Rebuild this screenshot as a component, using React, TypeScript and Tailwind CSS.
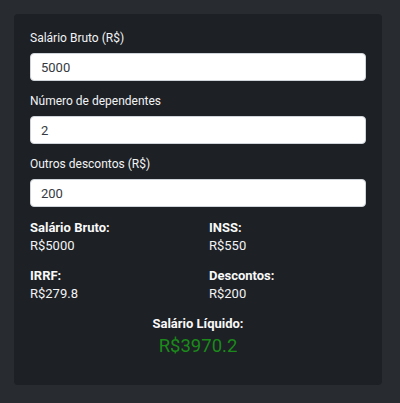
import { useState } from "react";

function Field({
  label,
  value,
  onChange,
}: {
  label: string;
  value: string;
  onChange: (v: string) => void;
}) {
  return (
    <div className="mb-[12px] flex flex-col">
      <label className="text-[12px] leading-[17px] text-[#f1f3f5]">{label}</label>
      <input
        type="number"
        value={value}
        onChange={(e) => onChange(e.target.value)}
        className="mt-[6px] h-[28px] w-full rounded-[4px] border border-[#ced4da] bg-white px-[10px] text-[13px] text-[#343a40] outline-none"
      />
    </div>
  );
}

function Stat({ label, value }: { label: string; value: string }) {
  return (
    <div className="flex flex-col">
      <span className="text-[13px] leading-[18px] font-bold text-[#f8f9fa]">{label}</span>
      <span className="text-[13px] leading-[18px] text-[#f1f3f5]">{value}</span>
    </div>
  );
}

export default function App() {
  const [bruto, setBruto] = useState("5000");
  const [dependentes, setDependentes] = useState("2");
  const [outros, setOutros] = useState("200");

  const inss = 550;
  const irrf = 279.8;
  const liquido = Number(bruto) - inss - irrf - Number(outros);

  return (
    <div
      className="h-[403px] w-[400px] bg-[#282c31] pt-[14px] pl-[14px]"
      style={{ fontFamily: "Roboto, 'Liberation Sans', sans-serif" }}
    >
      <div className="h-[371px] w-[368px] rounded-[4px] bg-[#1d2024] px-4 pt-[16px]">
        <Field label="Salário Bruto (R$)" value={bruto} onChange={setBruto} />
        <Field label="Número de dependentes" value={dependentes} onChange={setDependentes} />
        <Field label="Outros descontos (R$)" value={outros} onChange={setOutros} />

        <div className="mt-[2px] grid grid-cols-[179px_1fr] gap-y-[12px]">
          <Stat label="Salário Bruto:" value={`R$${bruto}`} />
          <Stat label="INSS:" value={`R$${inss}`} />
          <Stat label="IRRF:" value={`R$${irrf}`} />
          <Stat label="Descontos:" value={`R$${outros}`} />
        </div>

        <div className="mt-[12px] flex flex-col items-center">
          <span className="text-[13px] leading-[18px] font-bold text-[#f8f9fa]">Salário Líquido:</span>
          <span className="text-[18.5px] leading-[26px] text-[#1a8a1a]">
            R${Math.round(liquido * 10) / 10}
          </span>
        </div>
      </div>
    </div>
  );
}
